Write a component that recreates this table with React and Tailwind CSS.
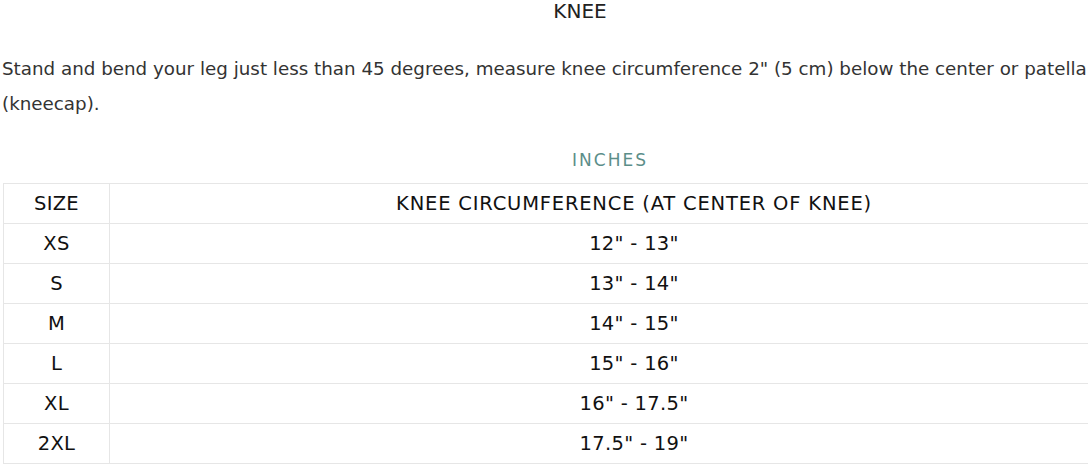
export default function App() {
  const rows = [
    ["XS", '12" - 13"'],
    ["S", '13" - 14"'],
    ["M", '14" - 15"'],
    ["L", '15" - 16"'],
    ["XL", '16" - 17.5"'],
    ["2XL", '17.5" - 19"'],
  ];
  return (
    <div className="w-[1088px] h-[465px] overflow-hidden bg-white">
      <div className="w-[1160px] text-[#333] font-['DejaVu_Sans',sans-serif]">
        <div className="text-center text-[20px] leading-[22px] text-[#222]">KNEE</div>
        <p className="mt-[29px] pl-[2px] text-[18.3px] leading-[35px] w-[1100px]">
          Stand and bend your leg just less than 45 degrees, measure knee circumference 2" (5 cm) below the center or patella (kneecap).
        </p>
        <div className="mt-[29px] text-center pl-[60px] text-[17px] tracking-[2px] text-[#5c8e89] leading-[20px]">INCHES</div>
        <table className="ml-[3px] mt-[13px] w-[1156px] border-collapse text-[19.5px] tracking-[0.3px] text-[#111]">
          <tbody>
            <tr className="h-[40px]">
              <td className="w-[106px] border border-[#e6e6e6] text-center">SIZE</td>
              <td className="border border-[#e6e6e6] text-center tracking-[0.8px]">KNEE CIRCUMFERENCE (AT CENTER OF KNEE)</td>
            </tr>
            {rows.map(([s, v]) => (
              <tr key={s} className="h-[40px]">
                <td className="border border-[#e6e6e6] text-center">{s}</td>
                <td className="border border-[#e6e6e6] text-center">{v}</td>
              </tr>
            ))}
          </tbody>
        </table>
      </div>
    </div>
  );
}
